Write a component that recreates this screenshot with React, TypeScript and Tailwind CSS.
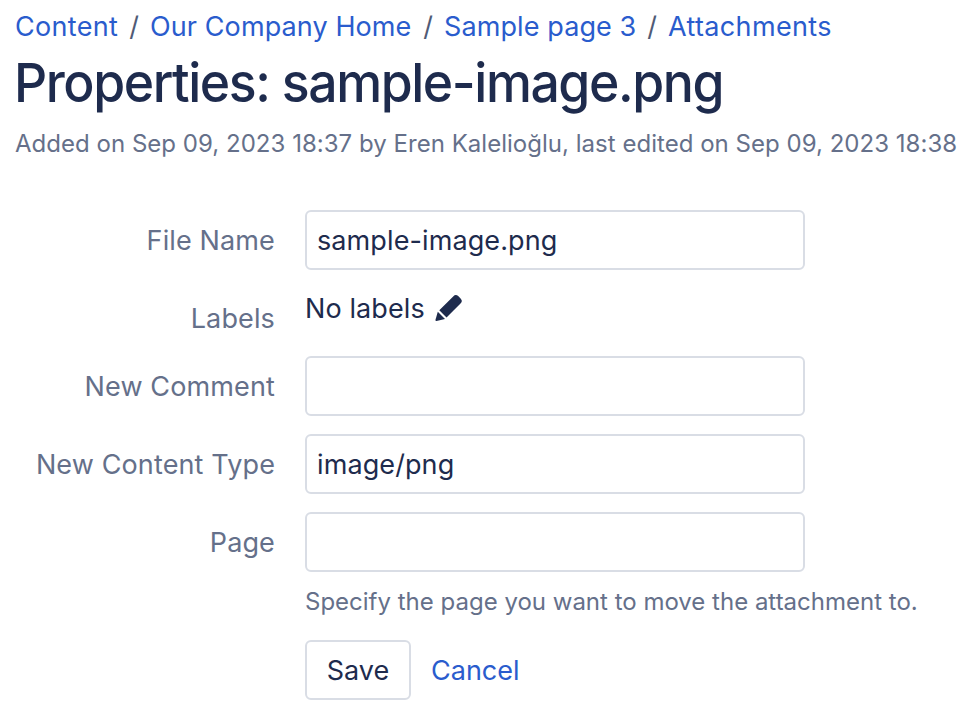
import React from "react";

const crumbs = [
  { label: "Content", className: "w-[103px] tracking-[0.3px]" },
  { label: "Our Company Home", className: "w-[262px] tracking-[0.1px]" },
  { label: "Sample page 3", className: "w-[192px] tracking-[0.1px]" },
  { label: "Attachments", className: "w-[164px] tracking-[0.35px]" },
];

function Label({ text }: { text: string }) {
  return (
    <label className="flex h-[60px] w-[275px] shrink-0 items-center justify-end whitespace-nowrap pt-[2px] tracking-[0.13px] text-[#65708a]">
      {text}
    </label>
  );
}

function Field({ value }: { value: string }) {
  return (
    <input
      defaultValue={value}
      className="ml-[30px] h-[60px] w-[500px] rounded-[6px] border-2 border-[#d9dde5] bg-white px-[10px] tracking-[0.1px] text-[#1e2b4d] outline-none"
    />
  );
}

export default function App() {
  return (
    <main className="h-[708px] w-[972px] overflow-hidden bg-white font-['Inter',sans-serif] text-[27px] leading-[40px] text-[#1e2b4d]">
      <nav className="flex h-[54px] items-center whitespace-nowrap pl-[15px] text-[#2a5ccd]">
        {crumbs.map((c, i) => (
          <React.Fragment key={c.label}>
            {i > 0 && <span className="w-[32px] text-center text-[#505b76]">/</span>}
            <a className={c.className}>{c.label}</a>
          </React.Fragment>
        ))}
      </nav>
      <h1 className="h-[62px] whitespace-nowrap pl-[14px] text-[54px] font-medium leading-[58px] tracking-[-1.5px]">
        <span className="inline-block origin-left scale-x-[0.958]">Properties: sample-image.png</span>
      </h1>
      <p className="h-[94px] whitespace-nowrap pl-[15px] pt-[8px] text-[24px] tracking-[0.025px] text-[#65708a]">
        Added on Sep 09, 2023 18:37 by Eren Kalelioğlu, last edited on Sep 09, 2023 18:38
      </p>
      <form>
        <div className="flex">
          <Label text="File Name" />
          <Field value="sample-image.png" />
        </div>
        <div className="mt-[18px] flex h-[60px]">
          <Label text="Labels" />
          <div className="ml-[30px] flex h-[42px] items-center">
            <span className="w-[120px] whitespace-nowrap tracking-[0.1px]">No labels</span>
            <svg className="-mt-[2px] ml-[10px]" width="28" height="28" viewBox="0 0 28 28" fill="#1e2b4d">
              <path d="M4.3 16.2 18.2 2.4Q20.7-.1 23.2 2.1L25.8 4.7Q28 7.1 25.5 9.6L11.5 23.4Z" />
              <path d="M2.8 17.7 10 24.9 1.5 27Q.2 27.2.5 25.8Z" />
            </svg>
          </div>
        </div>
        <div className="mt-[8px] flex">
          <Label text="New Comment" />
          <Field value="" />
        </div>
        <div className="mt-[18px] flex">
          <Label text="New Content Type" />
          <Field value="image/png" />
        </div>
        <div className="mt-[18px] flex">
          <Label text="Page" />
          <Field value="" />
        </div>
        <p className="ml-[305px] mt-[10px] h-[40px] whitespace-nowrap text-[24px] text-[#65708a]">
          Specify the page you want to move the attachment to.
        </p>
        <div className="ml-[305px] mt-[18px] flex items-center">
          <button type="button" className="h-[60px] w-[106px] rounded-[6px] border-2 border-[#d9dde5] pt-[2px]">Save</button>
          <a className="ml-[20px] pt-[2px] text-[#2a5ccd]">Cancel</a>
        </div>
      </form>
    </main>
  );
}
